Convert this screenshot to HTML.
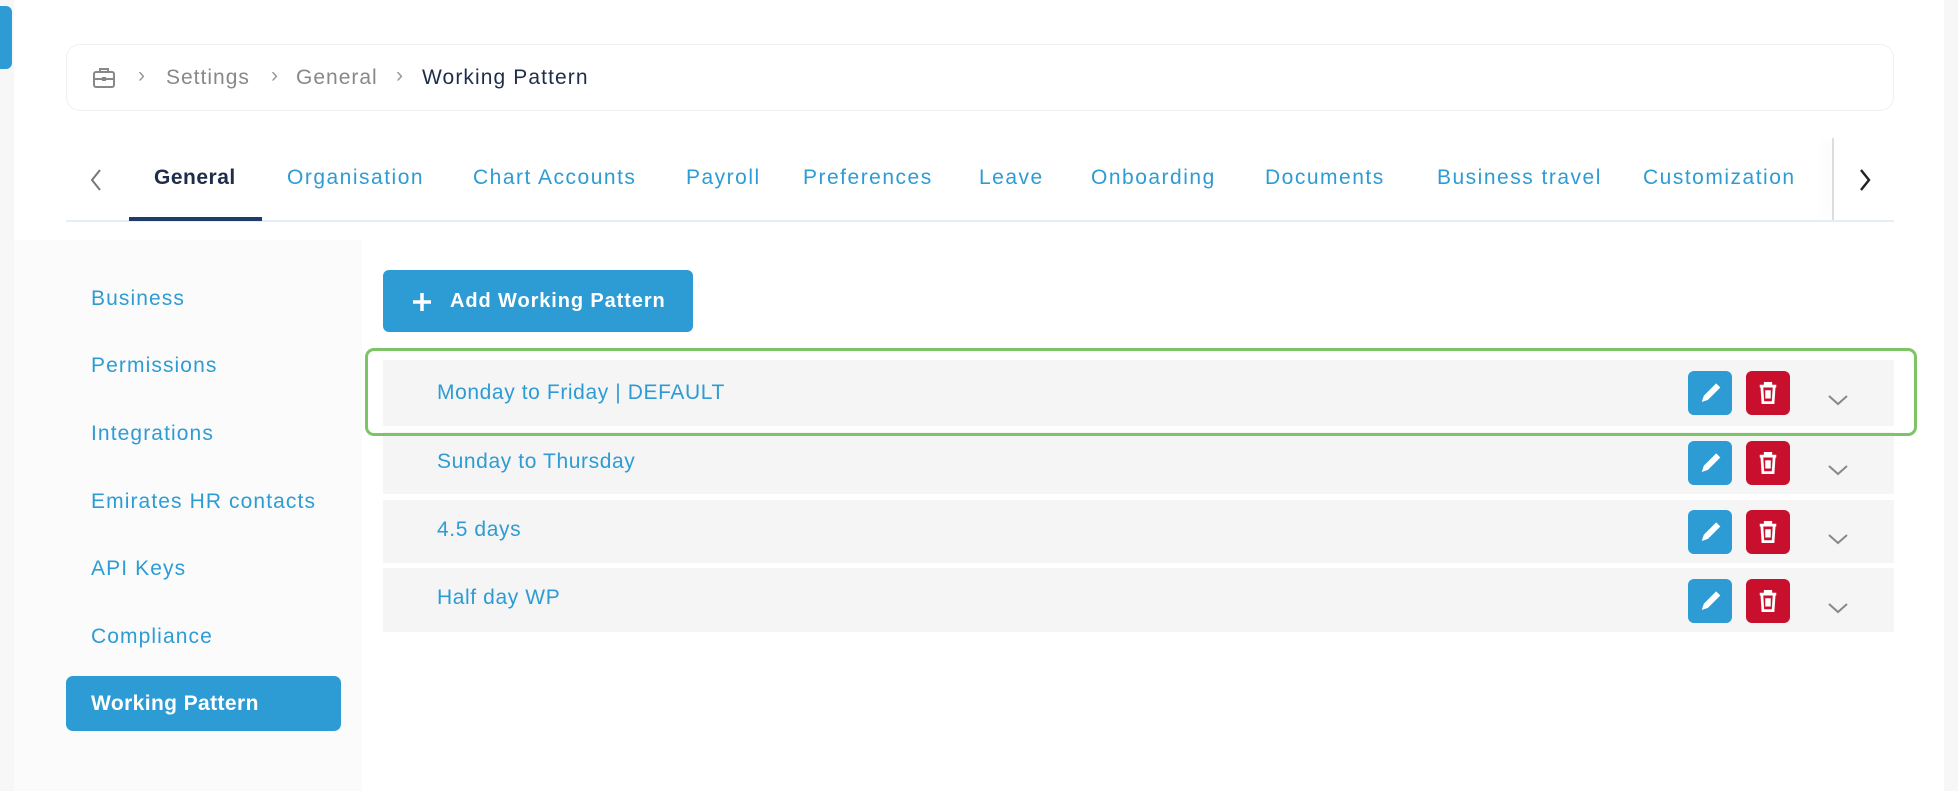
<!DOCTYPE html>
<html><head><meta charset="utf-8"><style>
*{box-sizing:border-box;margin:0;padding:0}
body{width:1958px;height:791px;background:#f7f7f8;font-family:"Liberation Sans",sans-serif;position:relative;overflow:hidden}
.abs{position:absolute}
.card{left:14px;top:0;width:1930px;height:791px;background:#fff}
.side{left:14px;top:240px;width:348px;height:551px;background:#fbfbfb}
.bc{left:66px;top:44px;width:1828px;height:67px;border:1px solid #eef0f2;border-radius:14px;background:#fff}
.t{position:absolute;white-space:nowrap;font-size:21px}
.tab{color:#2d9cd4;font-size:21px;top:166px;letter-spacing:1.5px}
.si{color:#2d9cd4;font-size:21px;left:91px;letter-spacing:1.1px}
.row{left:383px;width:1511px;background:#f5f5f5}
.row span{position:absolute;left:54px;color:#2d9cd4;font-size:21px;letter-spacing:.6px}
.eb,.db{position:absolute;width:44px;height:44px;border-radius:6px}
.eb{background:#2d9cd4;left:1305px}.db{background:#c8102e;left:1363px}
</style></head><body>
<div class="abs" style="left:0;top:6px;width:12px;height:63px;background:#2d9cd4;border-radius:0 6px 6px 0"></div>
<div class="abs card"></div>
<div class="abs side"></div>
<div class="abs bc"></div>
<svg class="abs" style="left:92px;top:67px" width="24" height="22" viewBox="0 0 24 22" fill="none" stroke="#888" stroke-width="2"><rect x="2" y="5" width="20" height="15" rx="2"/><path d="M8 5V2h8v3M2 12h20"/><rect x="10" y="10" width="4" height="4" fill="#888" stroke="none"/></svg>
<div class="t" style="left:138px;top:64px;color:#999">›</div>
<div class="t" style="left:166px;top:66px;color:#888;letter-spacing:1px">Settings</div>
<div class="t" style="left:271px;top:64px;color:#999">›</div>
<div class="t" style="left:296px;top:66px;color:#888;letter-spacing:1px">General</div>
<div class="t" style="left:396px;top:64px;color:#999">›</div>
<div class="t" style="left:422px;top:66px;color:#1e2d4a;letter-spacing:1.1px">Working Pattern</div>

<svg class="abs" style="left:88px;top:167px" width="16" height="26" viewBox="0 0 16 26"><path d="M12 3L4 13l8 10" stroke="#777" stroke-width="2" fill="none"/></svg>
<div class="t tab" style="left:154px;color:#1e2d4a;font-weight:bold;letter-spacing:.5px">General</div>
<div class="t tab" style="left:287px">Organisation</div>
<div class="t tab" style="left:473px">Chart Accounts</div>
<div class="t tab" style="left:686px">Payroll</div>
<div class="t tab" style="left:803px">Preferences</div>
<div class="t tab" style="left:979px">Leave</div>
<div class="t tab" style="left:1091px">Onboarding</div>
<div class="t tab" style="left:1265px">Documents</div>
<div class="t tab" style="left:1437px">Business travel</div>
<div class="t tab" style="left:1643px">Customization</div>
<div class="abs" style="left:1832px;top:138px;width:2px;height:82px;background:#ddd;box-shadow:-6px 0 10px rgba(0,0,0,.08)"></div>
<svg class="abs" style="left:1857px;top:167px" width="16" height="26" viewBox="0 0 16 26"><path d="M4 3l8 10-8 10" stroke="#222" stroke-width="2.4" fill="none"/></svg>
<div class="abs" style="left:66px;top:220px;width:1828px;height:2px;background:#e3eef7"></div>
<div class="abs" style="left:129px;top:217px;width:133px;height:4px;background:#1d3b6b"></div>

<div class="t si" style="top:287px">Business</div>
<div class="t si" style="top:354px">Permissions</div>
<div class="t si" style="top:422px">Integrations</div>
<div class="t si" style="top:490px">Emirates HR contacts</div>
<div class="t si" style="top:557px">API Keys</div>
<div class="t si" style="top:625px">Compliance</div>
<div class="abs" style="left:66px;top:676px;width:275px;height:55px;background:#2d9cd4;border-radius:7px"></div>
<div class="t si" style="top:692px;color:#fff;font-weight:bold;letter-spacing:.4px">Working Pattern</div>

<div class="abs" style="left:383px;top:270px;width:310px;height:62px;background:#2d9cd4;border-radius:6px"></div>
<svg class="abs" style="left:411px;top:291px" width="22" height="22" viewBox="0 0 22 22"><path d="M11 2v18M2 11h18" stroke="#fff" stroke-width="3.5"/></svg>
<div class="t" style="left:450px;top:290px;color:#fff;font-weight:bold;font-size:20px;letter-spacing:.9px">Add Working Pattern</div>

<div class="abs row" style="top:360px;height:66px"><span style="top:21px">Monday to Friday | DEFAULT</span><div class="eb" style="top:11px"></div><div class="db" style="top:11px"></div></div>
<div class="abs row" style="top:432px;height:62px"><span style="top:18px">Sunday to Thursday</span><div class="eb" style="top:9px"></div><div class="db" style="top:9px"></div></div>
<div class="abs row" style="top:500px;height:63px"><span style="top:18px">4.5 days</span><div class="eb" style="top:10px"></div><div class="db" style="top:10px"></div></div>
<div class="abs row" style="top:568px;height:64px"><span style="top:18px">Half day WP</span><div class="eb" style="top:11px"></div><div class="db" style="top:11px"></div></div>
<div class="abs" style="left:365px;top:348px;width:1552px;height:88px;border:3px solid #7dc466;border-radius:9px"></div>

<svg width="0" height="0" style="position:absolute"><defs>
<g id="pen"><path d="M10 22.5l1.5-4.5 9-9 3 3-9 9z" fill="#fff"/></g>
<g id="bin" fill="none" stroke="#fff" stroke-width="2"><path d="M10 11h12M14 11V9h4v2M11.5 11l.8 12h7.4l.8-12M15 14v6M17 14v6"/></g>
<g id="chev"><path d="M3 4l9 8 9-8" stroke="#888" stroke-width="2" fill="none"/></g>
</defs></svg>
<svg class="abs" style="left:1688px;top:371px" width="44" height="44" viewBox="0 0 32 32"><use href="#pen"/></svg>
<svg class="abs" style="left:1746px;top:371px" width="44" height="44" viewBox="0 0 32 32"><use href="#bin"/></svg>
<svg class="abs" style="left:1826px;top:392px" width="24" height="16"><use href="#chev"/></svg>
<svg class="abs" style="left:1688px;top:441px" width="44" height="44" viewBox="0 0 32 32"><use href="#pen"/></svg>
<svg class="abs" style="left:1746px;top:441px" width="44" height="44" viewBox="0 0 32 32"><use href="#bin"/></svg>
<svg class="abs" style="left:1826px;top:462px" width="24" height="16"><use href="#chev"/></svg>
<svg class="abs" style="left:1688px;top:510px" width="44" height="44" viewBox="0 0 32 32"><use href="#pen"/></svg>
<svg class="abs" style="left:1746px;top:510px" width="44" height="44" viewBox="0 0 32 32"><use href="#bin"/></svg>
<svg class="abs" style="left:1826px;top:531px" width="24" height="16"><use href="#chev"/></svg>
<svg class="abs" style="left:1688px;top:579px" width="44" height="44" viewBox="0 0 32 32"><use href="#pen"/></svg>
<svg class="abs" style="left:1746px;top:579px" width="44" height="44" viewBox="0 0 32 32"><use href="#bin"/></svg>
<svg class="abs" style="left:1826px;top:600px" width="24" height="16"><use href="#chev"/></svg>
</body></html>
